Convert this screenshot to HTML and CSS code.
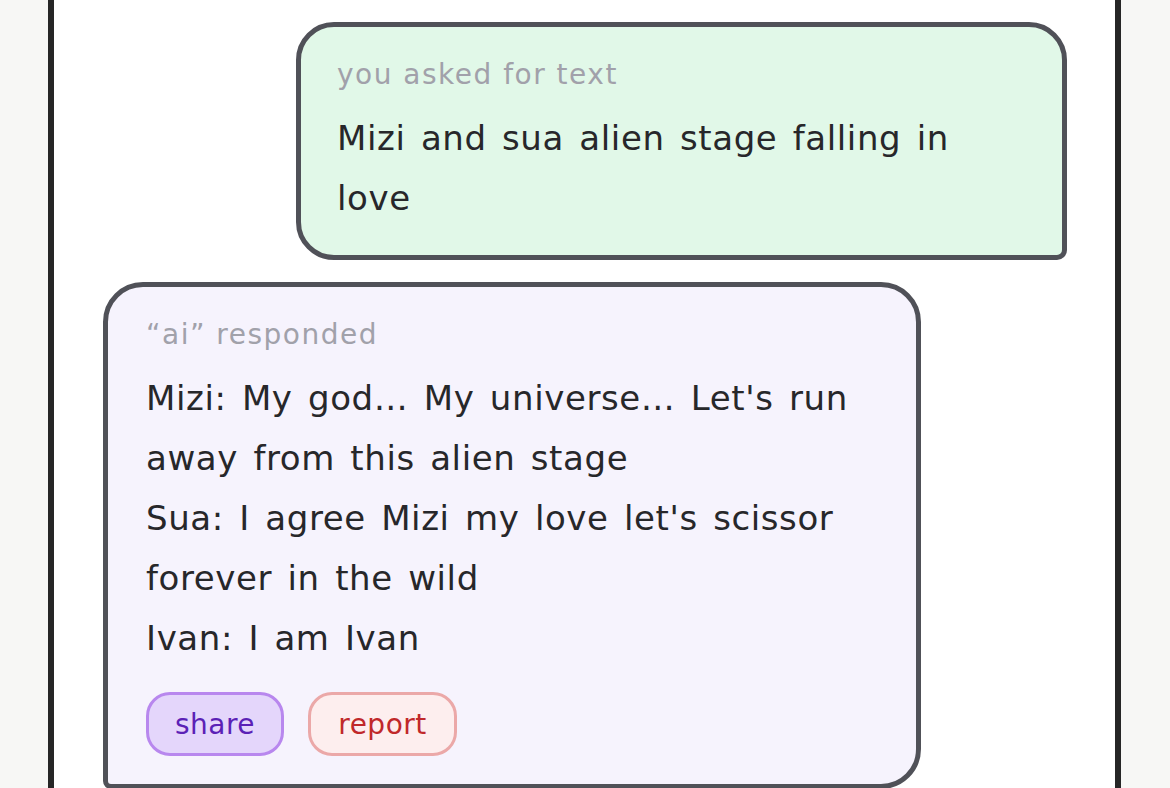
FILE: index.html
```html
<!DOCTYPE html>
<html lang="en">
<head>
<meta charset="utf-8">
<title>chat</title>
<link rel="stylesheet" href="styles.css">
</head>
<body>
<div class="page">
  <main class="panel">
    <section class="bubble bubble-user">
      <div class="label">you asked for text</div>
      <div class="body">Mizi and sua alien stage falling in love</div>
    </section>
    <section class="bubble bubble-ai">
      <div class="label">“ai” responded</div>
      <div class="body">
        <p class="line">Mizi: My god… My universe… Let's run away from this alien stage</p>
        <p class="line">Sua: I agree Mizi my love let's scissor forever in the wild</p>
        <p class="line">Ivan: I am Ivan</p>
      </div>
      <div class="actions">
        <button class="btn btn-share">share</button>
        <button class="btn btn-report">report</button>
      </div>
    </section>
  </main>
</div>
</body>
</html>
```
FILE: styles.css
```css
* { box-sizing: border-box; }
html, body {
  margin: 0;
  padding: 0;
  background: #f7f7f5;
  font-family: "DejaVu Sans", "Noto Sans", sans-serif;
  color: #27272a;
}
.page {
  display: flex;
  padding-left: 48px;
  height: 788px;
  overflow: hidden;
}
.panel {
  width: 1073px;
  background: #ffffff;
  border-left: 6px solid #262626;
  border-right: 6px solid #262626;
  padding: 22px 48px 0 49px;
  display: flex;
  flex-direction: column;
  gap: 22px;
}
.bubble {
  border: 5px solid #505158;
  padding: 28px 36px 27px 36px;
  flex-shrink: 0;
}
.bubble-user {
  align-self: flex-end;
  width: 771px;
  background: #e1f8e8;
  border-radius: 38px 38px 10px 38px;
  padding-right: 60px;
}
.bubble-ai {
  align-self: flex-start;
  width: 818px;
  background: #f6f3fd;
  border-radius: 40px 40px 40px 8px;
  padding-left: 38px;
  padding-right: 38px;
  padding-bottom: 28px;
}
.label {
  font-size: 28px;
  line-height: 40px;
  letter-spacing: 1.5px;
  color: #a1a1aa;
  margin-bottom: 13px;
}
.body {
  font-size: 34px;
  line-height: 60px;
  letter-spacing: 0.6px;
  word-spacing: 4px;
  color: #27272a;
}
.line { margin: 0; }
.actions {
  display: flex;
  gap: 24px;
  margin-top: 24px;
}
.btn {
  font-family: inherit;
  font-size: 28px;
  letter-spacing: 0.5px;
  height: 64px;
  padding: 0 20px;
  border-radius: 24px;
  border: 3px solid;
  display: flex;
  align-items: center;
  justify-content: center;
}
.btn-share {
  background: #e4d6fb;
  border-color: #b887ee;
  color: #5b21b6;
  width: 138px;
}
.btn-report {
  background: #fdeeee;
  border-color: #eba8a8;
  color: #c0282a;
  width: 149px;
}
```
